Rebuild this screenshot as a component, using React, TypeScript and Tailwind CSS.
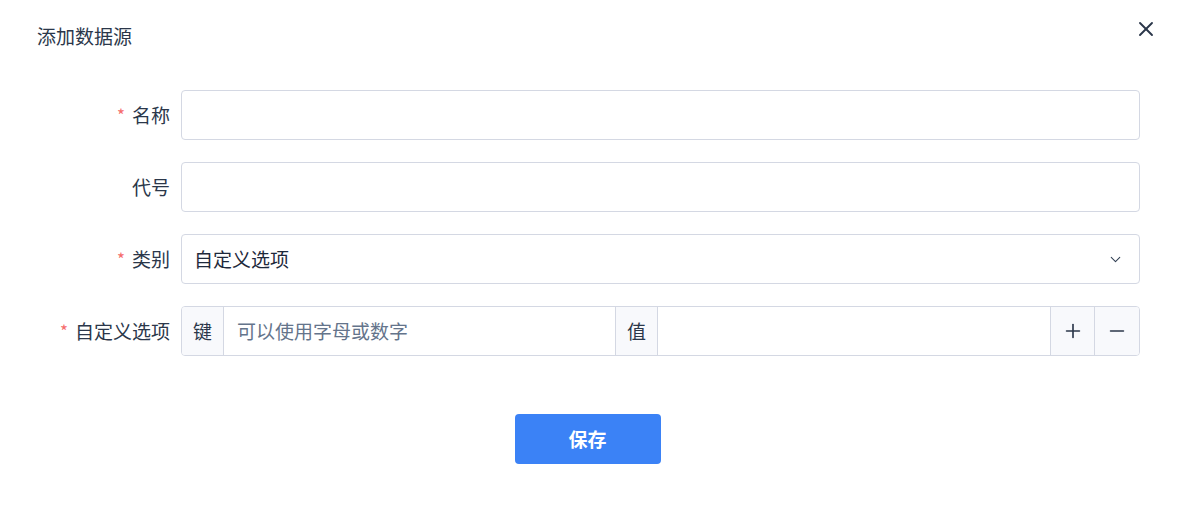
import { X, ChevronDown, Plus, Minus } from "lucide-react";

const font = { fontFamily: '"Noto Sans CJK SC", "Noto Sans", sans-serif' };

function Label({ text, required }: { text: string; required?: boolean }) {
  return (
    <div className="w-[181px] shrink-0 pr-[11px] flex items-center justify-end text-[19px] text-[#2b374a]">
      {required && <span className="text-[#f56c6c] mr-[7px] text-[17px]">*</span>}
      {text}
    </div>
  );
}

export default function App() {
  return (
    <div className="w-[1181px] h-[524px] bg-white relative text-[#2b374a]" style={font}>
      {/* header */}
      <div className="flex items-center justify-between pl-[37px] pr-[23px] pt-[18px] h-[52px]">
        <h2 className="text-[19px] text-[#2b374a] leading-none">添加数据源</h2>
        <button className="text-[#2b374a] -mt-[13px]">
          <X className="w-[24px] h-[24px]" strokeWidth={1.9} />
        </button>
      </div>

      {/* form */}
      <div className="flex flex-col gap-[22px] pt-[38px] pr-[41px]">
        <div className="flex h-[50px]">
          <Label text="名称" required />
          <input className="flex-1 border border-[#d4d8e3] rounded-[4px] px-3 outline-none" />
        </div>
        <div className="flex h-[50px]">
          <Label text="代号" />
          <input className="flex-1 border border-[#d4d8e3] rounded-[4px] px-3 outline-none" />
        </div>
        <div className="flex h-[50px]">
          <Label text="类别" required />
          <div className="flex-1 border border-[#d4d8e3] rounded-[4px] pl-[12px] pr-[15px] flex items-center justify-between text-[19px] text-[#1e293b]">
            <span>自定义选项</span>
            <ChevronDown className="w-[17px] h-[17px] text-[#334155]" strokeWidth={1.5} />
          </div>
        </div>
        <div className="flex h-[50px]">
          <Label text="自定义选项" required />
          <div className="flex-1 flex border border-[#d4d8e3] rounded-[4px] overflow-hidden text-[19px]">
            <div className="w-[42px] shrink-0 bg-[#f8f9fc] border-r border-[#d4d8e3] flex items-center justify-center text-[#2b374a]">键</div>
            <div className="w-[391px] shrink-0 flex items-center px-[13px] text-[#64748b]">可以使用字母或数字</div>
            <div className="w-[43px] shrink-0 bg-[#f8f9fc] border-x border-[#d4d8e3] flex items-center justify-center text-[#2b374a]">值</div>
            <div className="flex-1" />
            <div className="w-[44px] shrink-0 bg-[#f8f9fc] border-l border-[#d4d8e3] flex items-center justify-center">
              <Plus className="w-[22px] h-[22px] text-[#2b374a]" strokeWidth={1.8} />
            </div>
            <div className="w-[45px] shrink-0 bg-[#f8f9fc] border-l border-[#d4d8e3] flex items-center justify-center">
              <Minus className="w-[22px] h-[22px] text-[#2b374a]" strokeWidth={1.8} />
            </div>
          </div>
        </div>
      </div>

      <div className="flex justify-center pt-[58px] pr-[6px]">
        <button className="w-[146px] h-[50px] rounded-[4px] bg-[#3b82f6] text-white text-[19px] font-bold">保存</button>
      </div>
    </div>
  );
}
